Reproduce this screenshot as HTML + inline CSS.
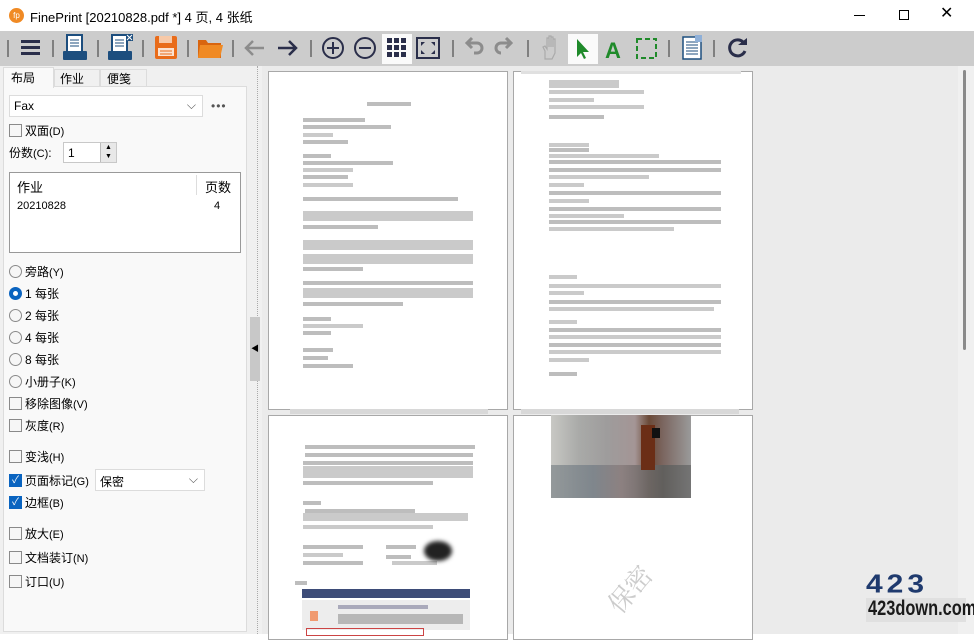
<!DOCTYPE html>
<html><head><meta charset="utf-8"><style>
*{margin:0;padding:0;box-sizing:border-box}
body{width:974px;height:634px;overflow:hidden;background:#fff;font-family:"Liberation Sans","Noto Sans CJK SC",sans-serif;font-size:12px;color:#000;position:relative}
.a{position:absolute}
.tb{position:absolute;left:0;top:31px;width:974px;height:35px;background:#cccccc}
.sep{position:absolute;top:40px;width:2px;height:17px;background:#808080}
.l{position:absolute;height:4px;background:#9a9a9a;opacity:.65}
.ll{position:absolute;height:4px;background:#cacaca}
.cb{position:absolute;width:13px;height:13px;border:1px solid #8a8a8a;background:#f6f6f6;left:9px}
.cbk{background:#0a64c0;border-color:#0a64c0}
.rd{position:absolute;width:13px;height:13px;border:1px solid #8a8a8a;border-radius:50%;background:#f6f6f6;left:9px}
.lb{position:absolute;left:25px;font-size:12px}
.lb small{font-size:11px}
.page{position:absolute;background:#fff;border:1px solid #a8a8a8}
</style></head><body>
<!-- title -->
<div class="a" style="left:9px;top:8px;width:15px;height:15px;border-radius:50%;background:#f08a24;color:#fff;font-size:8px;text-align:center;line-height:15px">fp</div>
<div class="a" style="left:30px;top:7px;font-size:13px">FinePrint [20210828.pdf *] 4 页, 4 张纸</div>
<div class="a" style="left:854px;top:15px;width:11px;height:1px;background:#000"></div>
<div class="a" style="left:899px;top:10px;width:10px;height:10px;border:1px solid #000"></div>
<div class="a" style="left:940px;top:5px;font-size:16px;line-height:18px">✕</div>

<div class="tb"></div>
<div class="sep" style="left:7px"></div><div class="sep" style="left:52px"></div><div class="sep" style="left:97px"></div><div class="sep" style="left:142px"></div><div class="sep" style="left:187px"></div><div class="sep" style="left:232px"></div><div class="sep" style="left:310px"></div><div class="sep" style="left:452px"></div><div class="sep" style="left:527px"></div><div class="sep" style="left:668px"></div><div class="sep" style="left:713px"></div>
<div class="a" style="left:382px;top:34px;width:30px;height:30px;background:#fafafa"></div>
<div class="a" style="left:568px;top:34px;width:30px;height:30px;background:#fafafa"></div>
<svg class="a" style="left:0;top:31px" width="760" height="35">
<g fill="#2a2e4a"><rect x="21" y="9" width="19" height="3"/><rect x="21" y="15" width="19" height="3"/><rect x="21" y="21" width="19" height="3"/></g>
<g><rect x="67" y="4" width="15" height="17" fill="#fff" stroke="#1d4e7e" stroke-width="2"/><path d="M70 9h9M70 12h9M70 15h9" stroke="#1d4e7e"/><rect x="63" y="20" width="24" height="9" rx="1" fill="#1d4e7e"/></g>
<g><rect x="112" y="4" width="15" height="17" fill="#fff" stroke="#1d4e7e" stroke-width="2"/><path d="M115 9h9M115 12h9M115 15h9" stroke="#1d4e7e"/><rect x="108" y="20" width="24" height="9" rx="1" fill="#1d4e7e"/><rect x="126" y="3" width="7" height="7" fill="#1d4e7e"/><path d="M127 4l5 5M132 4l-5 5" stroke="#fff"/></g>
<g><rect x="155" y="5" width="22" height="23" rx="2" fill="#e96c1a"/><rect x="159" y="5" width="13" height="7" fill="#f7c9a8"/><rect x="158" y="17" width="16" height="8" fill="#fbe2d0"/><path d="M160 20h12M160 23h12" stroke="#e96c1a"/></g>
<path d="M198 9h8l2 3h13v15h-23z" fill="#d9650f"/><path d="M200 14h23l-3 13h-22z" fill="#f08a24"/>
<path d="M264 17h-18M253 10l-7 7 7 7" stroke="#8c8c8c" stroke-width="2.5" fill="none"/>
<path d="M278 17h18M289 10l7 7-7 7" stroke="#2a2e4a" stroke-width="2.5" fill="none"/>
<circle cx="333" cy="17" r="10" fill="none" stroke="#2a2e4a" stroke-width="2"/><path d="M327 17h12M333 11v12" stroke="#2a2e4a" stroke-width="2"/>
<circle cx="365" cy="17" r="10" fill="none" stroke="#2a2e4a" stroke-width="2"/><path d="M359 17h12" stroke="#2a2e4a" stroke-width="2"/>
<g fill="#2a2e4a"><rect x="387" y="7" width="5" height="5"/><rect x="394" y="7" width="5" height="5"/><rect x="401" y="7" width="5" height="5"/><rect x="387" y="14" width="5" height="5"/><rect x="394" y="14" width="5" height="5"/><rect x="401" y="14" width="5" height="5"/><rect x="387" y="21" width="5" height="5"/><rect x="394" y="21" width="5" height="5"/><rect x="401" y="21" width="5" height="5"/></g>
<rect x="417" y="7" width="22" height="20" fill="none" stroke="#2a2e4a" stroke-width="2"/><path d="M421 11l4 0-4 4zM435 11l-4 0 4 4zM421 23l4 0-4-4zM435 23l-4 0 4-4z" fill="#2a2e4a"/>
<path d="M467 12h10a5 5 0 0 1 0 10h-3M472 7l-5 5 5 5" stroke="#8c8c8c" stroke-width="3" fill="none"/>
<path d="M511 12h-10a5 5 0 0 0 0 10M506 7l5 5-5 5" stroke="#8c8c8c" stroke-width="3" fill="none"/>
<path d="M545 28v-8l-2-4 2-1 2 3v-11h2v9-11h2v11-10h2v10-8h2v14l-3 6z" fill="none" stroke="#aaa" stroke-width="1.2"/>
<path d="M577 8v18l4-4 3 6 2-1-3-6h6z" fill="#1f8a2a"/>
<text x="605" y="27" font-family="Liberation Sans" font-weight="bold" font-size="22" fill="#1f8a2a">A</text>
<rect x="637" y="8" width="19" height="19" fill="none" stroke="#1f8a2a" stroke-width="2" stroke-dasharray="5 3"/>
<rect x="683" y="6" width="18" height="22" fill="#fff" stroke="#1d4e7e" stroke-width="1.5"/><path d="M686 11h12M686 14h12M686 17h12M686 20h12M686 23h12" stroke="#1d4e7e"/><rect x="695" y="4" width="7" height="7" fill="#8fb0d8"/>
<path d="M744 12a8 8 0 1 0 1 8" stroke="#2a2e4a" stroke-width="3" fill="none"/><path d="M738 8h9v-7z" fill="#2a2e4a" transform="translate(0,6)"/>
</svg>

<!-- left panel -->
<div class="a" style="left:0;top:66px;width:262px;height:568px;background:#f0f0f0"></div>
<div class="a" style="left:3px;top:86px;width:244px;height:546px;background:#f9f9f9;border:1px solid #dcdcdc"></div>
<div class="a" style="left:3px;top:67px;width:51px;height:21px;background:#f9f9f9;border:1px solid #dcdcdc;border-bottom:none;padding:1px 7px;font-size:12px">布局</div>
<div class="a" style="left:54px;top:69px;width:46px;height:18px;background:#f0f0f0;border:1px solid #dcdcdc;padding:0 5px;font-size:12px">作业</div>
<div class="a" style="left:100px;top:69px;width:47px;height:18px;background:#f0f0f0;border:1px solid #dcdcdc;padding:0 6px;font-size:12px">便笺</div>
<div class="a" style="left:9px;top:95px;width:194px;height:22px;background:#fff;border:1px solid #dcdcdc;padding:3px 4px">Fax<span style="position:absolute;right:6px;top:2px;color:#555">⌵</span></div>
<div class="a" style="left:211px;top:99px;font-size:12px;color:#555;letter-spacing:1px">•••</div>
<div class="cb" style="top:124px"></div><div class="lb" style="top:122px">双面<small>(D)</small></div>
<div class="lb" style="left:9px;top:144px">份数<small>(C)</small>:</div>
<div class="a" style="left:63px;top:142px;width:54px;height:21px;background:#fff;border:1px solid #c8c8c8;padding:3px 4px">1</div>
<div class="a" style="left:100px;top:143px;width:16px;height:19px;background:#e8e8e8;border-left:1px solid #bbb;font-size:7px;text-align:center;line-height:9px">▲<br>▼</div>
<div class="a" style="left:9px;top:172px;width:232px;height:81px;background:#fff;border:1px solid #999"></div>
<div class="a" style="left:196px;top:175px;width:1px;height:20px;background:#ddd"></div>
<div class="lb" style="left:17px;top:177px;font-size:13px">作业</div><div class="lb" style="left:205px;top:177px;font-size:13px">页数</div>
<div class="lb" style="left:17px;top:200px;font-size:11px">20210828</div><div class="lb" style="left:214px;top:200px;font-size:11px">4</div>
<div class="rd" style="top:265px"></div><div class="lb" style="top:263px">旁路<small>(Y)</small></div>
<div class="rd" style="top:287px;border:4px solid #0a64c0;background:#fff"></div><div class="lb" style="top:285px">1 每张</div>
<div class="rd" style="top:309px"></div><div class="lb" style="top:307px">2 每张</div>
<div class="rd" style="top:331px"></div><div class="lb" style="top:329px">4 每张</div>
<div class="rd" style="top:353px"></div><div class="lb" style="top:351px">8 每张</div>
<div class="rd" style="top:375px"></div><div class="lb" style="top:373px">小册子<small>(K)</small></div>
<div class="cb" style="top:397px"></div><div class="lb" style="top:395px">移除图像<small>(V)</small></div>
<div class="cb" style="top:419px"></div><div class="lb" style="top:417px">灰度<small>(R)</small></div>
<div class="cb" style="top:450px"></div><div class="lb" style="top:448px">变浅<small>(H)</small></div>
<div class="cb cbk" style="top:474px;color:#fff;font-size:10px;line-height:11px;text-align:center">✓</div><div class="lb" style="top:472px">页面标记<small>(G)</small></div>
<div class="a" style="left:95px;top:469px;width:110px;height:22px;background:#fff;border:1px solid #dcdcdc;padding:3px 4px">保密<span style="position:absolute;right:6px;top:2px;color:#555">⌵</span></div>
<div class="cb cbk" style="top:496px;color:#fff;font-size:10px;line-height:11px;text-align:center">✓</div><div class="lb" style="top:494px">边框<small>(B)</small></div>
<div class="cb" style="top:527px"></div><div class="lb" style="top:525px">放大<small>(E)</small></div>
<div class="cb" style="top:551px"></div><div class="lb" style="top:549px">文档装订<small>(N)</small></div>
<div class="cb" style="top:575px"></div><div class="lb" style="top:573px">订口<small>(U)</small></div>
<div class="a" style="left:257px;top:66px;width:0;height:568px;border-left:1px dotted #aaa"></div>
<div class="a" style="left:250px;top:317px;width:10px;height:64px;background:#c8c8c8"></div>
<div class="a" style="left:251px;top:343px;font-size:8px">◀</div>

<!-- view -->
<div class="a" style="left:262px;top:66px;width:696px;height:568px;background:#ebebeb"></div>
<div class="a" style="left:958px;top:66px;width:16px;height:568px;background:#f0f0f0"></div>
<div class="a" style="left:963px;top:70px;width:3px;height:280px;background:#8a8a8a;border-radius:2px"></div>
<div class="page" style="left:268px;top:71px;width:240px;height:339px"></div>
<div class="page" style="left:513px;top:71px;width:240px;height:339px"></div>
<div class="page" style="left:268px;top:415px;width:240px;height:225px"></div>
<div class="page" style="left:513px;top:415px;width:240px;height:225px"></div>
<div class="a" style="left:521px;top:71px;width:220px;height:3px;background:#e0e0e0"></div>
<div class="a" style="left:290px;top:409px;width:198px;height:5px;background:#d8d8d8"></div>
<div class="a" style="left:521px;top:409px;width:218px;height:5px;background:#d8d8d8"></div>
<!-- page1 lines -->
<div class="l" style="left:367px;top:102px;width:44px"></div>
<div class="l" style="left:303px;top:118px;width:62px"></div><div class="l" style="left:303px;top:125px;width:88px"></div><div class="ll" style="left:303px;top:133px;width:30px"></div><div class="l" style="left:303px;top:140px;width:45px"></div>
<div class="l" style="left:303px;top:154px;width:28px"></div><div class="l" style="left:303px;top:161px;width:90px"></div><div class="ll" style="left:303px;top:168px;width:50px"></div><div class="l" style="left:303px;top:175px;width:45px"></div><div class="ll" style="left:303px;top:183px;width:50px"></div>
<div class="l" style="left:303px;top:197px;width:155px"></div><div class="ll" style="left:303px;top:211px;width:170px;height:10px"></div><div class="l" style="left:303px;top:225px;width:75px"></div>
<div class="ll" style="left:303px;top:240px;width:170px;height:10px"></div><div class="ll" style="left:303px;top:254px;width:170px;height:10px"></div><div class="l" style="left:303px;top:267px;width:60px"></div>
<div class="l" style="left:303px;top:281px;width:170px"></div><div class="ll" style="left:303px;top:288px;width:170px;height:10px"></div><div class="l" style="left:303px;top:302px;width:100px"></div>
<div class="l" style="left:303px;top:317px;width:28px"></div><div class="ll" style="left:303px;top:324px;width:60px"></div><div class="l" style="left:303px;top:331px;width:28px"></div>
<div class="l" style="left:303px;top:348px;width:30px"></div><div class="l" style="left:303px;top:356px;width:25px"></div><div class="l" style="left:303px;top:364px;width:50px"></div>
<!-- page2 lines -->
<div class="ll" style="left:549px;top:80px;width:70px;height:8px"></div><div class="ll" style="left:549px;top:90px;width:95px"></div><div class="ll" style="left:549px;top:98px;width:45px"></div><div class="ll" style="left:549px;top:105px;width:95px"></div><div class="l" style="left:549px;top:115px;width:55px"></div>
<div class="ll" style="left:549px;top:143px;width:40px"></div><div class="l" style="left:549px;top:148px;width:40px"></div><div class="ll" style="left:549px;top:154px;width:110px"></div><div class="l" style="left:549px;top:160px;width:172px"></div><div class="l" style="left:549px;top:168px;width:172px"></div><div class="ll" style="left:549px;top:175px;width:100px"></div>
<div class="ll" style="left:549px;top:183px;width:35px"></div><div class="l" style="left:549px;top:191px;width:172px"></div><div class="ll" style="left:549px;top:199px;width:40px"></div><div class="l" style="left:549px;top:207px;width:172px"></div><div class="ll" style="left:549px;top:214px;width:75px"></div><div class="l" style="left:549px;top:220px;width:172px"></div><div class="ll" style="left:549px;top:227px;width:125px"></div>
<div class="ll" style="left:549px;top:275px;width:28px"></div><div class="ll" style="left:549px;top:284px;width:172px"></div><div class="ll" style="left:549px;top:291px;width:35px"></div><div class="l" style="left:549px;top:300px;width:172px"></div><div class="ll" style="left:549px;top:307px;width:165px"></div>
<div class="ll" style="left:549px;top:320px;width:28px"></div><div class="l" style="left:549px;top:328px;width:172px"></div><div class="ll" style="left:549px;top:335px;width:172px"></div><div class="l" style="left:549px;top:343px;width:172px"></div><div class="ll" style="left:549px;top:350px;width:172px"></div><div class="ll" style="left:549px;top:358px;width:40px"></div>
<div class="l" style="left:549px;top:372px;width:28px"></div>
<!-- page3 lines -->
<div class="l" style="left:305px;top:445px;width:170px"></div><div class="l" style="left:305px;top:453px;width:168px"></div><div class="l" style="left:303px;top:461px;width:170px"></div><div class="ll" style="left:303px;top:466px;width:170px;height:12px"></div><div class="l" style="left:303px;top:481px;width:130px"></div>
<div class="l" style="left:303px;top:501px;width:18px"></div><div class="l" style="left:305px;top:509px;width:110px"></div><div class="ll" style="left:303px;top:513px;width:165px;height:8px"></div><div class="ll" style="left:303px;top:525px;width:130px"></div>
<div class="l" style="left:303px;top:545px;width:60px"></div><div class="ll" style="left:303px;top:553px;width:40px"></div><div class="l" style="left:303px;top:561px;width:60px"></div>
<div class="l" style="left:386px;top:545px;width:30px"></div><div class="l" style="left:386px;top:555px;width:25px"></div><div class="ll" style="left:392px;top:561px;width:45px"></div>
<div class="a" style="left:424px;top:541px;width:28px;height:20px;border-radius:50%;background:#222;filter:blur(2px)"></div>
<div class="l" style="left:295px;top:581px;width:12px"></div>
<div class="a" style="left:302px;top:589px;width:168px;height:9px;background:#3d4c78"></div>
<div class="ll" style="left:302px;top:600px;width:168px;height:30px;background:#ededed"></div>
<div class="a" style="left:310px;top:611px;width:8px;height:10px;background:#f09a70"></div>
<div class="ll" style="left:338px;top:605px;width:90px;background:#aab"></div><div class="l" style="left:338px;top:614px;width:125px;height:10px"></div>
<div class="a" style="left:306px;top:628px;width:118px;height:8px;border:1px solid #c44"></div>
<!-- page4 image -->
<div class="a" style="left:551px;top:415px;width:140px;height:83px;background:linear-gradient(90deg,#c8c8c4 0%,#a9aaa8 20%,#9e9c9c 40%,#a49595 60%,#6b4a38 70%,#7b6660 80%,#9a9a9a 100%)"></div>
<div class="a" style="left:551px;top:465px;width:140px;height:33px;background:linear-gradient(90deg,#8e9496,#7b838a 30%,#8a7e7e 50%,#5e5e5c 80%,#707070);opacity:.9"></div>
<div class="a" style="left:641px;top:425px;width:14px;height:45px;background:#6b2e16"></div>
<div class="a" style="left:652px;top:428px;width:8px;height:10px;background:#111"></div>
<div class="a" style="left:603px;top:570px;font-size:26px;color:#ccc;transform:rotate(-50deg);font-family:'Noto Serif CJK SC',serif">保密</div>
<!-- watermark logo -->
<div class="a" style="left:866px;top:598px;width:100px;height:24px;background:#e0e0e0"></div>
<div class="a" style="left:866px;top:574px;font-family:'Liberation Sans';font-weight:bold;font-size:30px;color:#1f3a6e;line-height:26px;letter-spacing:4px;transform:scaleY(.85);transform-origin:top">423</div>
<div class="a" style="left:868px;top:598px;font-family:'Liberation Sans';font-weight:bold;font-size:21px;color:#1a1a1a;transform:scaleX(.78);transform-origin:left;line-height:22px">423down.com</div>
</body></html>
